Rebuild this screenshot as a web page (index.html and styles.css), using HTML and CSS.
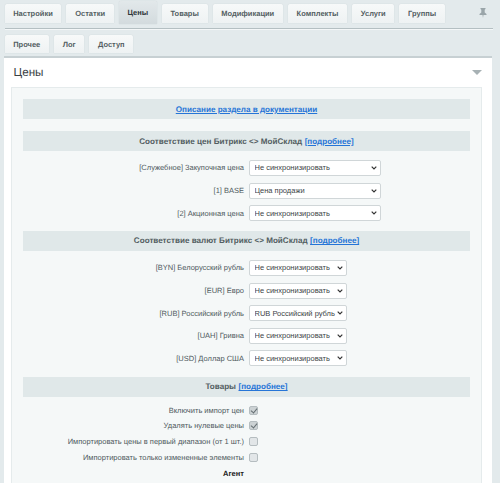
FILE: index.html
```html
<!DOCTYPE html>
<html lang="ru">
<head>
<meta charset="utf-8">
<title>Цены</title>
<link rel="stylesheet" href="styles.css">
</head>
<body>
<div class="tabbar main">
  <span class="tab">Настройки</span><span class="tab">Остатки</span><span class="tab active">Цены</span><span class="tab">Товары</span><span class="tab">Модификации</span><span class="tab">Комплекты</span><span class="tab">Услуги</span><span class="tab">Группы</span>
  <svg class="pin" width="8" height="10" viewBox="0 0 8 10"><path d="M1.500 0h5v1L5.700 1.700v2.800L7.500 6v1H4.500L4 10l-.5-3H.5V6l1.800-1.500V1.700L1.500 1z" fill="#9aa5a9"/></svg>
</div>
<div class="tabbar sub">
  <span class="tab">Прочее</span><span class="tab">Лог</span><span class="tab">Доступ</span>
</div>
<main class="panel">
  <header class="panel-head">
    <h1>Цены</h1>
    <span class="arrow"></span>
  </header>
  <div class="inner">
    <div class="bar link-bar"><a href="#">Описание раздела в документации</a></div>
    <div class="bar"><b>Соответствие цен Битрикс &lt;&gt; МойСклад</b> <a href="#">[подробнее]</a></div>
    <div class="rows prices">
      <div class="row"><label>[Служебное] Закупочная цена</label><select class="wide"><option>Не синхронизировать</option></select></div>
      <div class="row"><label>[1] BASE</label><select class="wide"><option>Цена продажи</option></select></div>
      <div class="row"><label>[2] Акционная цена</label><select class="wide"><option>Не синхронизировать</option></select></div>
    </div>
    <div class="bar"><b>Соответствие валют Битрикс &lt;&gt; МойСклад</b> <a href="#">[подробнее]</a></div>
    <div class="rows currencies">
      <div class="row"><label>[BYN] Белорусский рубль</label><select class="narrow"><option>Не синхронизировать</option></select></div>
      <div class="row"><label>[EUR] Евро</label><select class="narrow"><option>Не синхронизировать</option></select></div>
      <div class="row"><label>[RUB] Российский рубль</label><select class="narrow"><option>RUB Российский рубль</option></select></div>
      <div class="row"><label>[UAH] Гривна</label><select class="narrow"><option>Не синхронизировать</option></select></div>
      <div class="row"><label>[USD] Доллар США</label><select class="narrow"><option>Не синхронизировать</option></select></div>
    </div>
    <div class="bar"><b>Товары</b> <a href="#">[подробнее]</a></div>
    <div class="rows checks">
      <div class="row"><label>Включить импорт цен</label><span class="box on"></span></div>
      <div class="row"><label>Удалять нулевые цены</label><span class="box on"></span></div>
      <div class="row"><label>Импортировать цены в первый диапазон (от 1 шт.)</label><span class="box"></span></div>
      <div class="row"><label>Импортировать только измененные элементы</label><span class="box"></span></div>
      <div class="row"><label class="strong">Агент</label></div>
    </div>
  </div>
</main>
</body>
</html>
```

FILE: styles.css
```css
* { box-sizing: border-box; }
body {
  margin: 0;
  height: 483px;
  overflow: hidden;
  background: #e3eaec;
  font-family: "Liberation Sans", Arial, sans-serif;
  font-size: 7.5px;
  color: #4f5a5e;
  text-rendering: geometricPrecision;
}
.tabbar {
  display: flex;
  align-items: flex-start;
  gap: 5px;
  margin: 0 7px 0 4.500px;
  position: relative;
}
.tabbar.main {
  height: 29px;
  padding-top: 4px;
  border-bottom: 1px solid #b4bfc2;
  box-shadow: 0 1px 0 #f4f7f8;
}
.tabbar.sub {
  height: 27px;
  padding-top: 6px;
}
.tab {
  display: flex;
  align-items: center;
  justify-content: center;
  height: 19px;
  padding: 0 8.700px;
  background: linear-gradient(#f7f9f9, #eef2f3);
  border-radius: 2px 2px 0 0;
  box-shadow: 0 0 1px #b9c4c7;
  font-weight: bold;
  color: #535e62;
}
.sub .tab { height: 18px; }
.tab.active {
  height: 23px;
  margin-top: -3px;
  background: linear-gradient(#e2e8ea, #d3dbde);
  color: #2f373a;
}
.pin { position: absolute; right: 6px; top: 8px; }
.panel {
  margin: 0 8px 0 4px;
  background: #fff;
  border-top: 2px solid #c7d0d3;
  padding: 0 10px 0 7px;
  height: 427px;
  overflow: hidden;
}
.panel-head {
  height: 29px;
  display: flex;
  align-items: center;
  justify-content: space-between;
  padding: 0 0 0 2.500px;
}
h1 { margin: 0; font-size: 11.700px; font-weight: normal; color: #3a4144; }
.arrow {
  width: 0;
  height: 0;
  margin: 0 0 1px;
  border-left: 5px solid transparent;
  border-right: 5px solid transparent;
  border-top: 5px solid #a7b1b4;
}
.inner {
  background: #f5f8f8;
  border: 1px solid #e5ebec;
  padding: 11px 11px 0;
  height: 400px;
}
.bar {
  height: 20px;
  background: #e0e8e9;
  display: flex;
  align-items: center;
  justify-content: center;
  gap: 2.500px;
  font-size: 8.100px;
  color: #525d61;
}
.link-bar { margin-bottom: 12px; }
.bar a { color: #2675d7; font-weight: bold; text-decoration: underline; }
.rows { display: flex; flex-direction: column; }
.prices { padding: 5.700px 0 6.500px; }
.currencies { padding: 5.700px 0 7.300px; }
.row {
  display: flex;
  align-items: center;
  height: 22.600px;
}
.row label {
  width: 226px;
  text-align: right;
  padding-right: 5px;
  flex: none;
}
select {
  appearance: none;
  height: 16px;
  background: #fff url("data:image/svg+xml,%3Csvg xmlns='http://www.w3.org/2000/svg' width='6' height='4'%3E%3Cpath d='M.7.7 3 3l2.300-2.300' fill='none' stroke='%23333' stroke-width='1.200'/%3E%3C/svg%3E") no-repeat right 3px center;
  border: 1px solid #d0d6d8;
  border-radius: 2px;
  font: 7.500px "Liberation Sans", Arial, sans-serif;
  color: #3c4447;
  padding: 0 0 0 4.500px;
}
.wide { width: 132px; }
.narrow { width: 98px; }
.checks { padding: 5.500px 0 0; }
.checks .row { height: 15.700px; }
.strong { font-weight: bold; color: #222; }
.box {
  width: 9px;
  height: 9px;
  border: 1px solid #b5bdc0;
  border-radius: 2px;
  background: #e2e6e8;
  position: relative;
}
.box.on { background: #ccd2d4; }
.box.on::after {
  content: "";
  position: absolute;
  left: 2px;
  top: 0;
  width: 3px;
  height: 5px;
  border: solid #636d71;
  border-width: 0 1px 1px 0;
  transform: rotate(40deg);
}
```
